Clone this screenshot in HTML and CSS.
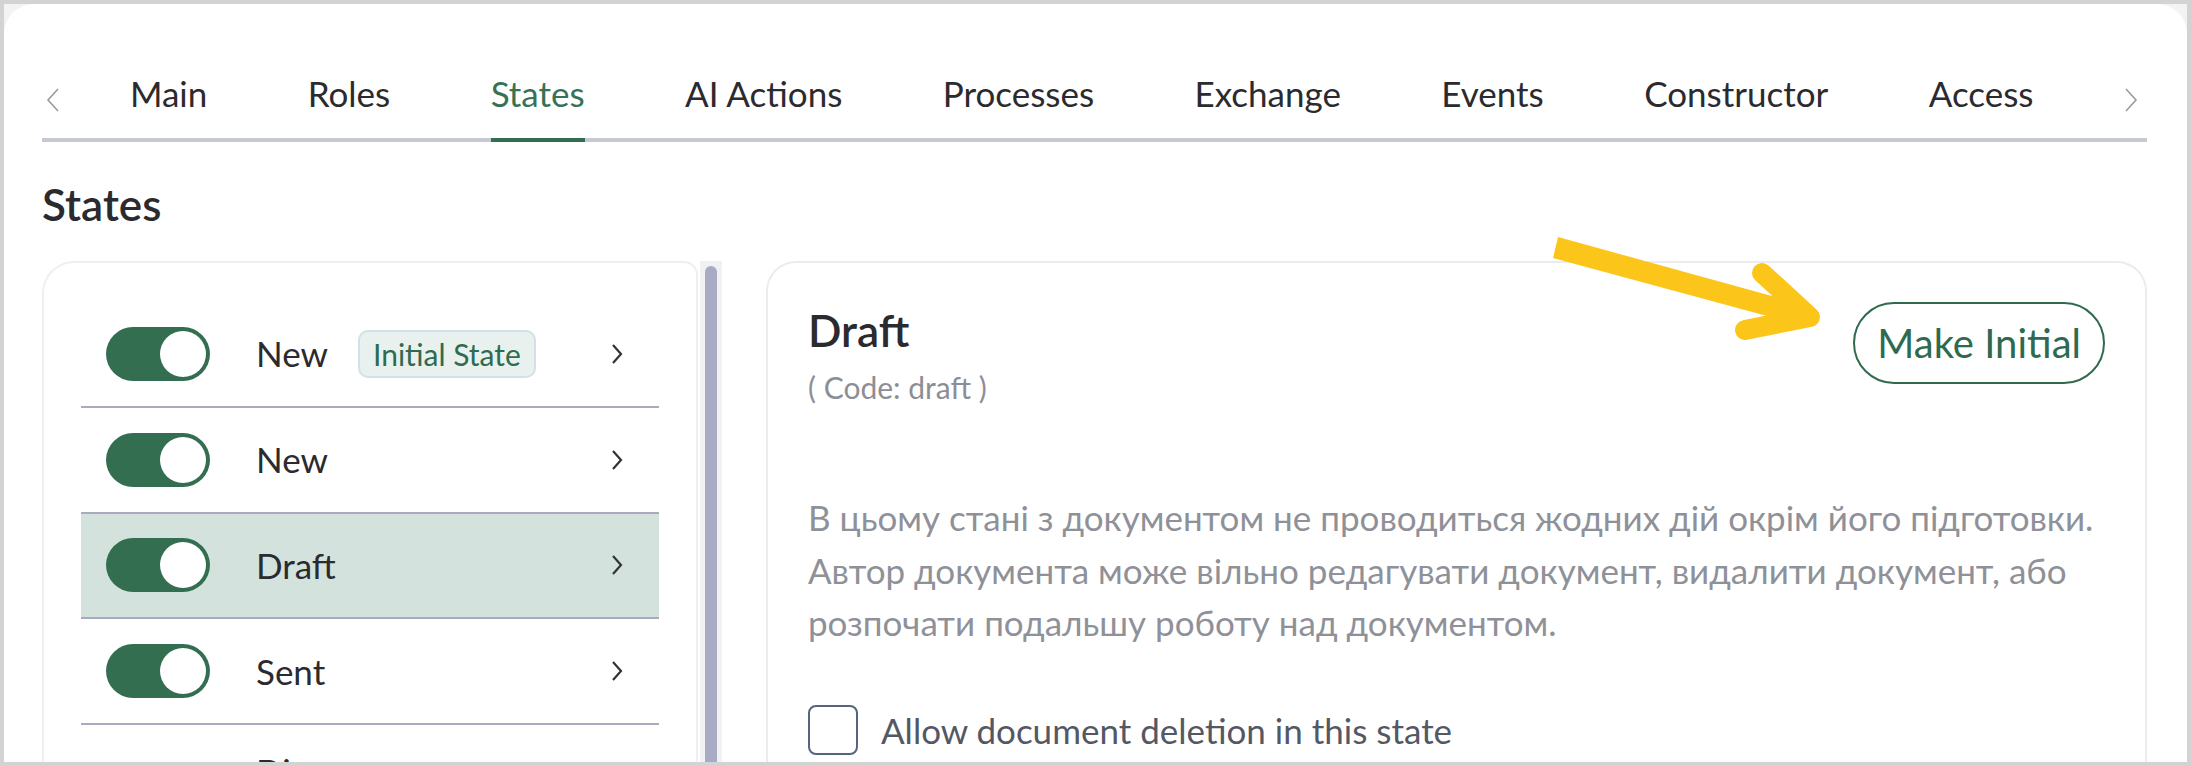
FILE: index.html
```html
<!DOCTYPE html>
<html lang="en">
<head>
    <meta charset="UTF-8">
    <meta name="viewport" content="width=device-width, initial-scale=1.0">
    <title>Document type - States</title>
    <link rel="stylesheet" href="styles.css">
</head>
<body>
    <div class="frame">
        <div class="page">
            <nav class="tabs">
                <span class="tabs-arrow tabs-arrow-left">
                    <svg width="14" height="24" viewBox="0 0 14 24"><polyline points="12,1 2,12 12,23" fill="none" stroke="#9a9a9a" stroke-width="1.6"/></svg>
                </span>
                <div class="tabs-list">
                    <a class="tab">Main</a>
                    <a class="tab">Roles</a>
                    <a class="tab active">States</a>
                    <a class="tab">AI Actions</a>
                    <a class="tab">Processes</a>
                    <a class="tab">Exchange</a>
                    <a class="tab">Events</a>
                    <a class="tab">Constructor</a>
                    <a class="tab">Access</a>
                </div>
                <span class="tabs-arrow tabs-arrow-right">
                    <svg width="14" height="24" viewBox="0 0 14 24"><polyline points="2,1 12,12 2,23" fill="none" stroke="#9a9a9a" stroke-width="1.6"/></svg>
                </span>
            </nav>

            <h1 class="section-title">States</h1>

            <div class="content">
                <div class="list-wrap">
                    <div class="state-list">
                        <div class="row">
                            <span class="toggle"><span class="knob"></span></span>
                            <span class="row-name">New</span>
                            <span class="badge">Initial State</span>
                            <svg class="chevron" width="12" height="22" viewBox="0 0 12 22"><polyline points="2,2 10,11 2,20" fill="none" stroke="#333" stroke-width="2.2"/></svg>
                        </div>
                        <div class="row">
                            <span class="toggle"><span class="knob"></span></span>
                            <span class="row-name">New</span>
                            <svg class="chevron" width="12" height="22" viewBox="0 0 12 22"><polyline points="2,2 10,11 2,20" fill="none" stroke="#333" stroke-width="2.2"/></svg>
                        </div>
                        <div class="row selected">
                            <span class="toggle"><span class="knob"></span></span>
                            <span class="row-name">Draft</span>
                            <svg class="chevron" width="12" height="22" viewBox="0 0 12 22"><polyline points="2,2 10,11 2,20" fill="none" stroke="#333" stroke-width="2.2"/></svg>
                        </div>
                        <div class="row">
                            <span class="toggle"><span class="knob"></span></span>
                            <span class="row-name">Sent</span>
                            <svg class="chevron" width="12" height="22" viewBox="0 0 12 22"><polyline points="2,2 10,11 2,20" fill="none" stroke="#333" stroke-width="2.2"/></svg>
                        </div>
                        <div class="row row-final">
                            <span class="toggle-space"></span>
                            <span class="row-name">Discourse</span>
                        </div>
                    </div>
                    <div class="scrollbar"><div class="scrollbar-thumb"></div></div>
                </div>

                <div class="detail">
                    <div class="detail-head">
                        <div>
                            <h2 class="detail-title">Draft</h2>
                            <div class="detail-code">( Code: draft )</div>
                        </div>
                        <button type="button" class="button-outline">Make Initial</button>
                    </div>
                    <p class="detail-text">В цьому стані з документом не проводиться жодних дій окрім його підготовки. Автор документа може вільно редагувати документ, видалити документ, або розпочати подальшу роботу над документом.</p>
                    <label class="check">
                        <span class="check-box"></span>
                        <span>Allow document deletion in this state</span>
                    </label>
                </div>
            </div>
        </div>

        <!-- annotation arrow -->
        <svg class="pointer" width="300" height="125" viewBox="0 0 300 125">
            <polygon points="18,7 268,76 268,97 13,28" fill="#fbc51a"/>
            <polyline points="222,43 270,87 205,100" fill="none" stroke="#fbc51a" stroke-width="20" stroke-linecap="round" stroke-linejoin="round"/>
        </svg>
    </div>
</body>
</html>
```

FILE: styles.css
```css
body {
    margin: 0;
    background-color: #d3d3d3;
    font-family: Lato, "Noto Sans", sans-serif;
    color: #2b2b2f;
}
.frame {
    position: relative;
    margin: 4px 5px 0 4px;
    height: 758px;
    background-color: #f3f3f3;
    overflow: hidden;
}
.page {
    box-sizing: border-box;
    height: 100%;
    padding: 0 40px 0 38px;
    background-color: #fff;
    border-radius: 30px 30px 0 0;
    overflow: hidden;
}

/* tabs */
.tabs {
    display: flex;
    align-items: flex-start;
    padding-top: 68px;
    border-bottom: 4px solid #c6c9d3;
}
.tabs-arrow {
    display: block;
    margin-top: 16px;
    height: 24px;
}
.tabs-arrow-left {
    margin-left: 4px;
}
.tabs-arrow-right {
    margin-left: auto;
    margin-right: 9px;
}
.tabs-list {
    display: flex;
    gap: 100.4px;
    margin-left: 70px;
}
.tab {
    font-size: 35px;
    line-height: 43px;
    padding-bottom: 23px;
    margin-bottom: -4px;
    border-bottom: 4px solid transparent;
    color: #2b2b2f;
    white-space: nowrap;
    cursor: pointer;
}
.tab.active {
    color: #377257;
    border-bottom-color: #336e51;
}

.section-title {
    margin: 36px 0 0;
    font-size: 44px;
    line-height: 53px;
    font-weight: 600;
}

/* main area */
.content {
    display: flex;
    gap: 44px;
    margin-top: 30px;
    height: 600px;
}
.list-wrap {
    display: flex;
    gap: 2px;
}
.state-list {
    box-sizing: border-box;
    width: 656px;
    padding: 39px 37px 0 37px;
    border: 2px solid #eeeff1;
    border-bottom: none;
    border-radius: 32px 14px 0 0;
}
.scrollbar {
    width: 22px;
    padding-top: 5px;
    background-color: #f1f1f3;
    display: flex;
    justify-content: center;
}
.scrollbar-thumb {
    width: 12px;
    height: 100%;
    background-color: #a9abc5;
    border-radius: 6px 6px 0 0;
}
.row {
    display: flex;
    align-items: center;
    height: 103.8px;
    padding: 0 36px 0 25px;
    border-bottom: 2px solid #a9aac0;
}
.row.selected {
    background-color: #d3e2dc;
}
.row-final {
    align-items: flex-start;
    padding-top: 25px;
    border-bottom: none;
}
.toggle {
    display: flex;
    align-items: center;
    justify-content: flex-end;
    box-sizing: border-box;
    width: 104px;
    height: 54px;
    padding: 0 4px;
    border-radius: 27px;
    background-color: #336e51;
    flex-shrink: 0;
}
.knob {
    width: 46px;
    height: 46px;
    border-radius: 50%;
    background-color: #fff;
}
.toggle-space {
    width: 104px;
    flex-shrink: 0;
}
.row-name {
    margin-left: 46px;
    font-size: 35px;
    line-height: 43px;
}
.badge {
    display: flex;
    align-items: center;
    height: 44px;
    margin-left: 30px;
    padding: 0 13px;
    font-size: 30px;
    color: #2f6b4f;
    background-color: #e9f1ef;
    border: 2px solid #d3e0e8;
    border-radius: 10px;
}
.chevron {
    margin-left: auto;
}

/* detail panel */
.detail {
    flex: 1;
    padding: 39px 40px 0 40px;
    border: 2px solid #ececee;
    border-bottom: none;
    border-radius: 30px 30px 0 0;
}
.detail-head {
    display: flex;
    justify-content: space-between;
    align-items: flex-start;
}
.detail-title {
    margin: 2px 0 0;
    font-size: 44px;
    line-height: 53px;
    font-weight: 600;
}
.detail-code {
    margin-top: 13px;
    font-size: 30px;
    line-height: 34px;
    color: #8d8e95;
}
.button-outline {
    height: 82px;
    padding: 0 22px;
    font-family: inherit;
    font-size: 40px;
    color: #2d6a4f;
    background-color: #fff;
    border: 2px solid #2f6a4e;
    border-radius: 41px;
    cursor: pointer;
}
.detail-text {
    margin: 87px 0 0;
    font-size: 35px;
    line-height: 52.5px;
    color: #8f9199;
}
.check {
    display: flex;
    align-items: center;
    gap: 23px;
    margin-top: 56px;
    font-size: 35px;
    color: #545864;
}
.check-box {
    box-sizing: border-box;
    width: 50px;
    height: 50px;
    border: 2px solid #56657f;
    border-radius: 8px;
}

.pointer {
    position: absolute;
    left: 1536px;
    top: 226px;
}
```
